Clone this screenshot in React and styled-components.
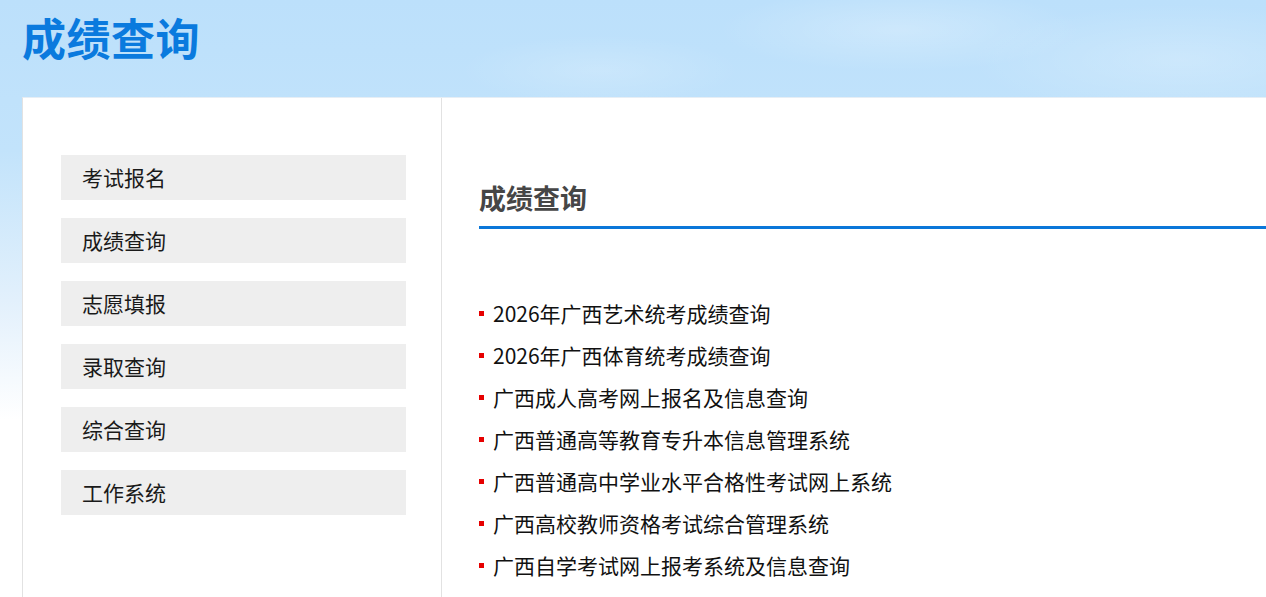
import React from 'react';
import styled, { createGlobalStyle } from 'styled-components';

const GlobalStyle = createGlobalStyle`
  html, body {
    margin: 0;
    padding: 0;
    overflow: hidden;
  }
  body {
    font-family: "Noto Sans CJK SC", "Liberation Sans", sans-serif;
    background:
      radial-gradient(ellipse 260px 60px at 900px 30px, rgba(255,255,255,0.25), transparent 70%),
      radial-gradient(ellipse 300px 80px at 1180px 60px, rgba(255,255,255,0.22), transparent 70%),
      radial-gradient(ellipse 200px 50px at 600px 70px, rgba(255,255,255,0.18), transparent 70%),
      linear-gradient(180deg, #bce0fb 0px, #c2e3fb 150px, #e2f0fc 300px, #ffffff 420px);
    min-height: 597px;
  }
`;

const menu = ['考试报名', '成绩查询', '志愿填报', '录取查询', '综合查询', '工作系统'];

const links = [
  '2026年广西艺术统考成绩查询',
  '2026年广西体育统考成绩查询',
  '广西成人高考网上报名及信息查询',
  '广西普通高等教育专升本信息管理系统',
  '广西普通高中学业水平合格性考试网上系统',
  '广西高校教师资格考试综合管理系统',
  '广西自学考试网上报考系统及信息查询',
];

function App() {
  return (
    <Page>
      <GlobalStyle />
      <Banner>
        <BannerTitle>成绩查询</BannerTitle>
      </Banner>
      <Main>
        <Sidebar>
          {menu.map((m) => (
            <MenuItem key={m}>{m}</MenuItem>
          ))}
        </Sidebar>
        <Content>
          <Heading>成绩查询</Heading>
          <LinkList>
            {links.map((l) => (
              <LinkItem key={l}>{l}</LinkItem>
            ))}
          </LinkList>
        </Content>
      </Main>
    </Page>
  );
}

const Page = styled.div`
  width: 1266px;
  height: 597px;
  padding-left: 22px;
  box-sizing: border-box;
  overflow: hidden;
`;

const Banner = styled.header`
  height: 97px;
`;

const BannerTitle = styled.h1`
  margin: 0;
  font-size: 44px;
  line-height: 74px;
  font-weight: 700;
  color: #0a7ade;
  letter-spacing: 0.5px;
`;

const Main = styled.main`
  display: flex;
  height: 500px;
  background: #fff;
  border-top: 1px solid #e6eef5;
  border-left: 1px solid #e2e2e2;
`;

const Sidebar = styled.aside`
  width: 345px;
  flex: none;
  padding: 57px 35px 0 38px;
  border-right: 1px solid #e2e2e2;
  display: flex;
  flex-direction: column;
  gap: 18px;
`;

const MenuItem = styled.div`
  height: 45px;
  background: #eeeeee;
  padding-left: 21px;
  font-size: 21px;
  line-height: 44px;
  color: #1a1a1a;
`;

const Content = styled.section`
  flex: 1;
  min-width: 0;
  padding: 80px 0 0 37px;
`;

const Heading = styled.h2`
  margin: 0;
  font-size: 27px;
  line-height: 40px;
  font-weight: 700;
  color: #464646;
  padding-bottom: 8px;
  border-bottom: 3px solid #0b77d9;
`;

const LinkList = styled.ul`
  list-style: none;
  margin: 63px 0 0;
  padding: 0;
`;

const LinkItem = styled.li`
  position: relative;
  padding-left: 14px;
  font-size: 21px;
  line-height: 42px;
  color: #111;

  &::before {
    content: '';
    position: absolute;
    left: 0;
    top: 19px;
    width: 5px;
    height: 5px;
    background: #e60000;
  }
`;

export default App;
